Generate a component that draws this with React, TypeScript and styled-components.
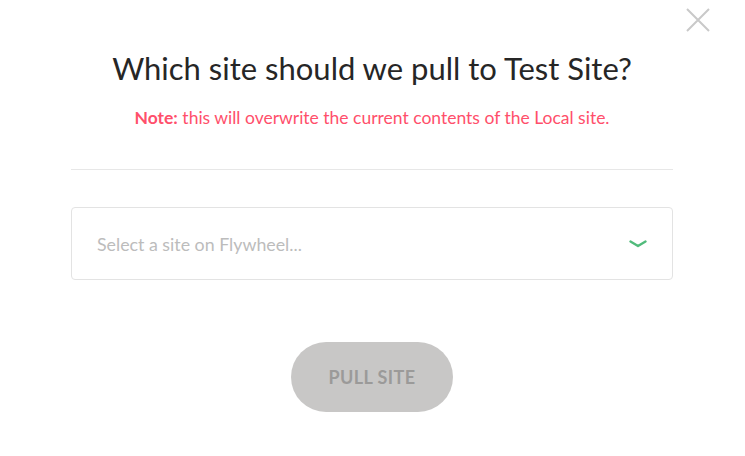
import React from 'react';
import styled, { createGlobalStyle } from 'styled-components';

const GlobalStyle = createGlobalStyle`
  html, body {
    margin: 0;
    padding: 0;
    background: #ffffff;
    font-family: Lato, "Open Sans", sans-serif;
  }
`;

const Modal = styled.div`
  position: relative;
  width: 745px;
  height: 456px;
  box-sizing: border-box;
  padding: 46px 72px 0 71px;
  display: flex;
  flex-direction: column;
  align-items: stretch;
`;

const CloseButton = styled.button`
  position: absolute;
  top: 7px;
  right: 34px;
  width: 26px;
  height: 26px;
  padding: 0;
  border: none;
  background: none;
  cursor: pointer;
`;

const Title = styled.h1`
  margin: 0;
  text-align: center;
  font-size: 31px;
  font-weight: 400;
  color: #262626;
  line-height: 44px;
`;

const Note = styled.p`
  margin: 17px 0 0;
  text-align: center;
  font-size: 17.5px;
  line-height: 22px;
  color: #ff4f6b;

  strong {
    font-weight: 700;
  }
`;

const Divider = styled.hr`
  margin: 40px 0 0;
  border: none;
  border-top: 1px solid #e7e7e7;
`;

const Select = styled.div`
  margin-top: 37px;
  height: 73px;
  box-sizing: border-box;
  border: 1px solid #e3e3e3;
  border-radius: 4px;
  display: flex;
  align-items: center;
  justify-content: space-between;
  padding: 0 25px 0 25px;
`;

const Placeholder = styled.span`
  font-size: 17.8px;
  color: #bcbcbc;
`;

const Footer = styled.div`
  margin-top: 62px;
  display: flex;
  justify-content: center;
`;

const PullButton = styled.button`
  width: 162px;
  height: 70px;
  border: none;
  border-radius: 35px;
  background: #c8c7c6;
  color: #9b9a99;
  font-family: Lato, "Open Sans", sans-serif;
  font-size: 18px;
  font-weight: 700;
  letter-spacing: 0.4px;
  cursor: not-allowed;
`;

export default function App() {
  return (
    <>
      <GlobalStyle />
      <Modal>
        <CloseButton aria-label="Close">
          <svg width="26" height="26" viewBox="0 0 26 26">
            <path d="M2 2 L24 24 M24 2 L2 24" stroke="#c9c9c9" strokeWidth="2" fill="none" />
          </svg>
        </CloseButton>
        <Title>Which site should we pull to Test Site?</Title>
        <Note>
          <strong>Note:</strong> this will overwrite the current contents of the Local site.
        </Note>
        <Divider />
        <Select>
          <Placeholder>Select a site on Flywheel...</Placeholder>
          <svg width="18" height="8" viewBox="0 0 18 8">
            <path d="M1.5 1.5 L9 6 L16.5 1.5" stroke="#51bb7b" strokeWidth="2.4" fill="none" strokeLinecap="round" strokeLinejoin="round" />
          </svg>
        </Select>
        <Footer>
          <PullButton disabled>PULL SITE</PullButton>
        </Footer>
      </Modal>
    </>
  );
}
